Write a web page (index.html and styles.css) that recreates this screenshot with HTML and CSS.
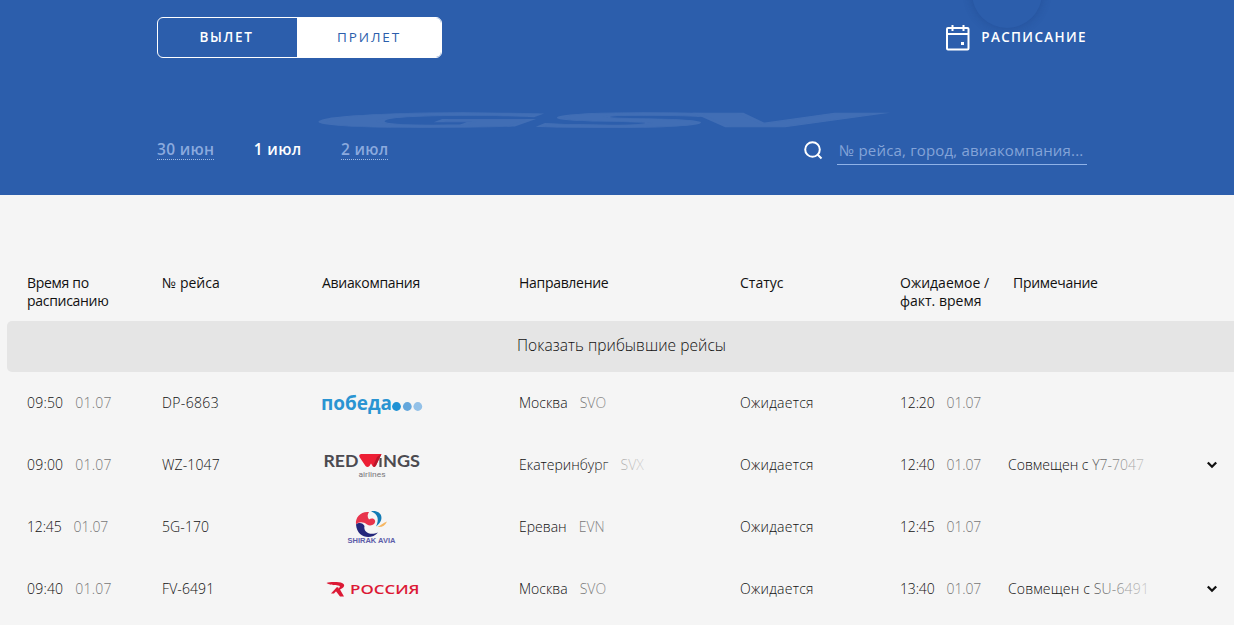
FILE: index.html
```html
<!DOCTYPE html>
<html lang="ru">
<head>
    <meta charset="UTF-8">
    <meta name="viewport" content="width=device-width, initial-scale=1.0">
    <title>Табло прилета</title>
    <link rel="stylesheet" href="styles.css">
</head>
<body>
    <header class="header">
        <div class="circle"></div>
        <svg class="watermark" width="572" height="18" viewBox="0 0 572 18">
            <g transform="translate(0 16.4) scale(1 0.071)">
                <text y="0"><tspan x="-6" textLength="240" lengthAdjust="spacingAndGlyphs">G</tspan><tspan x="218" textLength="186" lengthAdjust="spacingAndGlyphs">S</tspan><tspan x="360" textLength="190" lengthAdjust="spacingAndGlyphs">V</tspan></text>
            </g>
        </svg>
        <div class="header-row">
            <div class="tabs">
                <a class="tab"><span>ВЫЛЕТ</span></a>
                <a class="tab active"><span>ПРИЛЕТ</span></a>
            </div>
            <a class="schedule">
                <svg width="24" height="26" viewBox="0 0 24 26" fill="none" stroke="#fff" stroke-width="2">
                    <rect x="1" y="3" width="21.5" height="21.5" rx="1"/>
                    <path d="M1 9h21.5M6.5 0v6M17.5 0v6"/>
                    <rect x="15" y="17" width="3" height="3" fill="#fff" stroke="none"/>
                </svg>
                <span>РАСПИСАНИЕ</span>
            </a>
        </div>
        <div class="header-row filters">
            <div class="days">
                <a class="day">30 июн</a>
                <a class="day current">1 июл</a>
                <a class="day">2 июл</a>
            </div>
            <div class="search">
                <svg width="20" height="20" viewBox="0 0 20 20" fill="none" stroke="#fff" stroke-width="2">
                    <circle cx="9.5" cy="9.5" r="7.3"/>
                    <path d="M14.5 14.5l4 4"/>
                </svg>
                <input type="text" placeholder="№ рейса, город, авиакомпания...">
            </div>
        </div>
    </header>

    <main class="board">
        <div class="row head">
            <div>Время по<br>расписанию</div>
            <div class="h-num">№ рейса</div>
            <div>Авиакомпания</div>
            <div>Направление</div>
            <div class="h-num">Статус</div>
            <div class="h-fact">Ожидаемое /<br>факт. время</div>
            <div class="h-note">Примечание</div>
        </div>

        <div class="show-more"><span>Показать прибывшие рейсы</span></div>

        <div class="row">
            <div class="time">09:50<span class="date">01.07</span></div>
            <div class="num">DP-6863</div>
            <div class="logo">
                <svg width="102" height="24" viewBox="0 0 102 24">
                    <text class="pobeda" x="-1" y="19" textLength="71" lengthAdjust="spacingAndGlyphs">победа</text>
                    <circle cx="74.5" cy="15.5" r="4.4" fill="#1e92d4"/>
                    <circle cx="85.3" cy="15.5" r="4.4" fill="#64a7dc"/>
                    <circle cx="95.8" cy="15.5" r="4.4" fill="#93c1e8"/>
                </svg>
            </div>
            <div class="city">Москва<span class="code">SVO</span></div>
            <div class="status">Ожидается</div>
            <div class="time fact">12:20<span class="date">01.07</span></div>
            <div class="note"></div>
        </div>

        <div class="row">
            <div class="time">09:00<span class="date">01.07</span></div>
            <div class="num n-narrow">WZ-1047</div>
            <div class="logo">
                <svg width="100" height="30" viewBox="0 0 100 30">
                    <text class="redwings" x="1.5" y="17" textLength="35" lengthAdjust="spacingAndGlyphs">RED</text>
                    <text class="redwings" x="61" y="17" textLength="37" lengthAdjust="spacingAndGlyphs">NGS</text>
                    <path d="M57.4 8h2.2v9h-2.2z" fill="#4b4a50"/>
                    <path d="M39 4H59.5L54 15.5Q52.5 18 50.5 16L49 13.5L47.5 16Q45.5 18 43.5 16L37.5 7Q36.5 4.5 39 4z" fill="#ed1f35"/>
                    <path d="M59.5 4L54 15.5Q52.5 18 51 16L55 7z" fill="#b9172b"/>
                    <text class="airlines" x="36.5" y="26.5" textLength="27" lengthAdjust="spacingAndGlyphs">airlines</text>
                </svg>
            </div>
            <div class="city">Екатеринбург<span class="code">SVX</span></div>
            <div class="status">Ожидается</div>
            <div class="time fact">12:40<span class="date">01.07</span></div>
            <div class="note">Совмещен с <span>Y7-7047</span></div>
            <svg class="arrow" width="12" height="8" viewBox="0 0 12 8"><path d="M1.8 1.5l4.2 4.2 4.2-4.2" fill="none" stroke="#111" stroke-width="2.3"/></svg>
        </div>

        <div class="row">
            <div class="time t-narrow">12:45<span class="date">01.07</span></div>
            <div class="num n-narrow">5G-170</div>
            <div class="logo">
                <svg width="100" height="36" viewBox="0 0 100 36">
                    <path d="M47 3C39 2 33 8 34 15.5C37 12 42 13 45 15.5C49 18 54 15 53 11.5C52 9 49 9 47 10.5C45 8 45.5 5 47 3z" fill="#e8344c"/>
                    <path d="M34 15.5C37 13 41 14 42.5 17C41 23 48 27 56 23.5C49 31.5 35 29 34 15.5z" fill="#24277b"/>
                    <path d="M49 2.2C60 0.5 63.5 11 54 17.5C57.5 10.5 56 5 49 2.2z" fill="#127bb5"/>
                    <path d="M65 12.5C63 17 60 18.5 55.5 18C58.5 16.5 61 14 65 12.5z" fill="#f6b661"/>
                    <text class="shirak" x="25.5" y="33.5" textLength="48" lengthAdjust="spacingAndGlyphs">SHIRAK AVIA</text>
                </svg>
            </div>
            <div class="city">Ереван<span class="code">EVN</span></div>
            <div class="status">Ожидается</div>
            <div class="time fact">12:45<span class="date">01.07</span></div>
            <div class="note"></div>
        </div>

        <div class="row">
            <div class="time">09:40<span class="date">01.07</span></div>
            <div class="num n-narrow">FV-6491</div>
            <div class="logo">
                <svg width="100" height="20" viewBox="0 0 100 20">
                    <path d="M4.5 4C8 2.5 18 3 20 4C24 5.5 22 9 18 10.5L22 17.5H18L13 11C17 10 20 7 16 6.5C13 6 10 6.8 4.5 4z" fill="#dc1935"/>
                    <path d="M15 8L9 14.5L12 14.5L17 9z" fill="#dc1935"/>
                    <text class="rossiya" x="28" y="15" textLength="69.5" lengthAdjust="spacingAndGlyphs">РОССИЯ</text>
                </svg>
            </div>
            <div class="city">Москва<span class="code">SVO</span></div>
            <div class="status">Ожидается</div>
            <div class="time fact">13:40<span class="date">01.07</span></div>
            <div class="note n-wide">Совмещен с <span>SU-6491</span></div>
            <svg class="arrow" width="12" height="8" viewBox="0 0 12 8"><path d="M1.8 1.5l4.2 4.2 4.2-4.2" fill="none" stroke="#111" stroke-width="2.3"/></svg>
        </div>
    </main>
</body>
</html>
```
FILE: styles.css
```css
* {
    box-sizing: border-box;
}
body {
    margin: 0;
    height: 625px;
    overflow: hidden;
    background: #f5f5f5;
    color: #111;
    font-family: "Open Sans", "Noto Sans", sans-serif;
    font-size: 14px;
}
.header {
    position: relative;
    height: 195px;
    padding: 17px 147px 0 157px;
    overflow: hidden;
    background: #2c5eac;
    color: #fff;
}
.header-row {
    position: relative;
    display: flex;
    justify-content: space-between;
    align-items: center;
}
.circle {
    position: absolute;
    left: 972px;
    top: -42px;
    width: 70px;
    height: 70px;
    border-radius: 50%;
    background: #2c5eac;
    box-shadow: 0 0 10px rgba(20, 50, 110, 0.3);
}
.watermark {
    position: absolute;
    left: 318px;
    top: 111px;
    overflow: visible;
}
.watermark text {
    font: italic bold 280px "DejaVu Sans", sans-serif;
    fill: #416eb5;
    stroke: #416eb5;
    stroke-width: 8px;
}
.tabs {
    display: flex;
    width: 285px;
    height: 41px;
    border: 1px solid #fff;
    border-radius: 6px;
    overflow: hidden;
}
.tab {
    display: flex;
    justify-content: center;
    align-items: center;
    width: 139px;
    padding: 0 2px 2px 0;
    font-size: 13.5px;
    font-weight: 600;
    letter-spacing: 1.7px;
}
.tab.active {
    width: 144px;
    padding-right: 0;
    background: #fff;
    color: #2c5eac;
    font-weight: 500;
    letter-spacing: 1.9px;
}
.schedule {
    display: flex;
    align-items: center;
    gap: 11px;
    font-weight: 600;
    font-size: 13.5px;
    letter-spacing: 1.35px;
}
.schedule span {
    padding-bottom: 2px;
}
.filters {
    margin-top: 76px;
}
.days {
    display: flex;
    gap: 39.5px;
    font-size: 15.5px;
    font-weight: 600;
    line-height: 19px;
    letter-spacing: 0.3px;
}
.day {
    color: #8baade;
    border-bottom: 1px dotted #9db8e4;
}
.day.current {
    color: #fff;
    border-color: transparent;
}
.search {
    display: flex;
    align-items: center;
    gap: 14px;
}
.search input {
    width: 250px;
    height: 31px;
    padding: 1px 2px 0;
    border: 0;
    border-bottom: 1px solid #8fb2e8;
    background: none;
    color: #fff;
    font: 15px "Open Sans", sans-serif;
    letter-spacing: 0.17px;
}
.search input::placeholder {
    color: #84a4d8;
    opacity: 1;
}
.board {
    padding-top: 79px;
}
.row {
    display: grid;
    grid-template-columns: 135px 160px 197px 221px 160px 108px 198px 12px;
    align-items: center;
    height: 62px;
    padding: 0 0 2px 27px;
    font-weight: 300;
    white-space: nowrap;
}
.head {
    height: 47px;
    padding-bottom: 0;
    align-items: start;
    font-weight: 400;
    line-height: 18px;
    letter-spacing: -0.3px;
}
.h-num, .h-fact {
    letter-spacing: 0;
}
.h-note {
    padding-left: 5px;
}
.show-more {
    display: flex;
    align-items: center;
    height: 51px;
    margin-left: 7px;
    padding: 0 0 3px 510px;
    border-radius: 5px 0 0 5px;
    background: #e5e5e5;
    font-size: 15.5px;
    font-weight: 300;
    letter-spacing: 0.05px;
}
.time {
    letter-spacing: 0.2px;
}
.time.fact, .time.t-narrow {
    letter-spacing: -0.15px;
}
.num {
    letter-spacing: 0.35px;
}
.num.n-narrow {
    letter-spacing: 0.1px;
}
.status {
    letter-spacing: 0.25px;
}
.date, .code {
    margin-left: 12px;
    color: #777;
}
.logo svg {
    display: block;
    margin-top: 2px;
}
.arrow {
    margin-top: 2px;
}
.pobeda {
    font: bold 19px "Open Sans", sans-serif;
    fill: #2a94d2;
}
.redwings {
    font: bold 17px Lato, sans-serif;
    fill: #4b4a50;
}
.airlines {
    font: 8px Roboto, sans-serif;
    fill: #77767b;
}
.shirak {
    font: bold 7px "Liberation Sans", sans-serif;
    fill: #5d5da9;
}
.rossiya {
    font: 600 12px "Open Sans", sans-serif;
    fill: #dc1935;
}
.city, .note {
    position: relative;
}
/* fade out the end of long cells */
.city::after, .note::after {
    content: "";
    position: absolute;
    top: 0;
    bottom: 0;
    left: 70px;
    width: 75px;
    background: linear-gradient(to right, rgba(245, 245, 245, 0), #f5f5f5);
}
.note::after {
    left: 85px;
}
.note span {
    color: #555;
}
.note.n-wide {
    letter-spacing: 0.15px;
}
```
